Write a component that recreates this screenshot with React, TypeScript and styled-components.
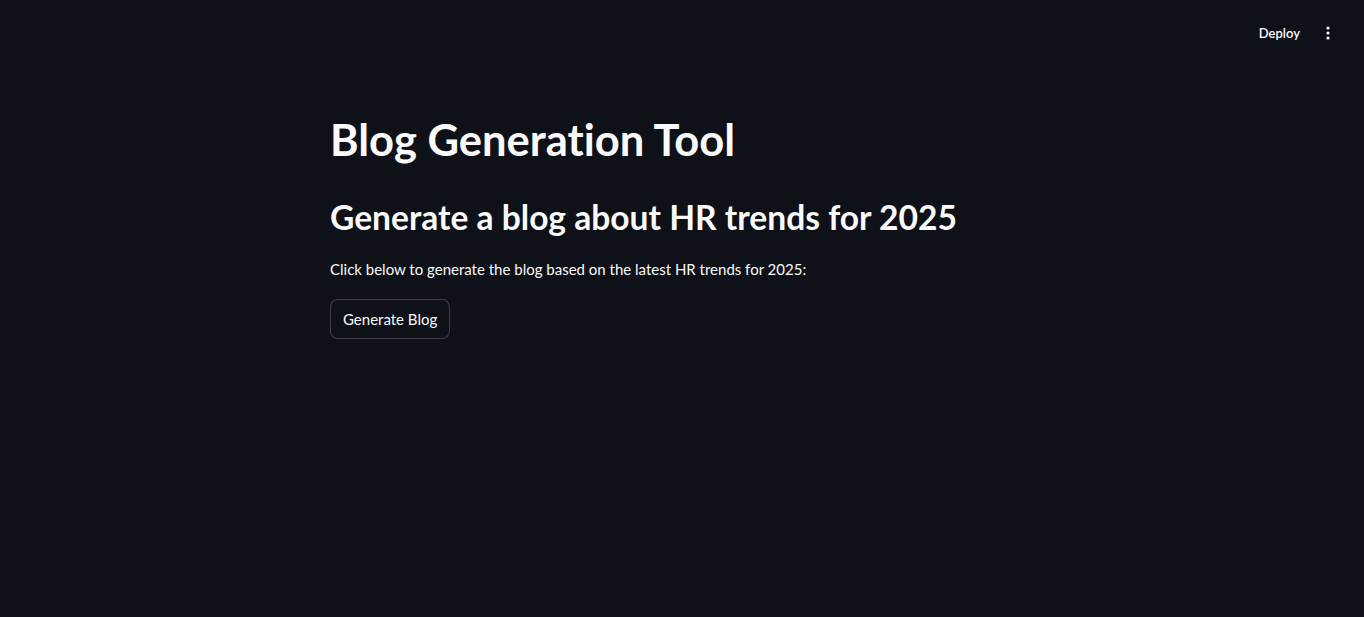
import React from "react";
import styled, { createGlobalStyle } from "styled-components";

const Global = createGlobalStyle`
  html, body { margin: 0; padding: 0; background: #0e1117; }
  body {
    font-family: Lato, "Noto Sans", sans-serif;
    color: #fafafa;
    font-variant-ligatures: none;
    font-feature-settings: "liga" 0, "clig" 0;
  }
  * { box-sizing: border-box; }
`;

const Page = styled.div`
  min-height: 617px;
  background: #0e1117;
  display: flex;
  flex-direction: column;
`;

const Header = styled.header`
  height: 60px;
  display: flex;
  align-items: center;
  justify-content: flex-end;
  padding: 0 20px 0 0;
  gap: 4px;
`;

const HeaderButton = styled.button`
  background: transparent;
  border: none;
  color: #fafafa;
  font-family: Lato, "Noto Sans", sans-serif;
  font-size: 13px;
  font-weight: 600;
  padding: 4px 8px;
  cursor: pointer;
  display: flex;
  align-items: center;
  margin-top: 6px;
`;

const Main = styled.main`
  width: 736px;
  margin: 0 auto;
  padding: 33px 16px 160px;
  display: flex;
  flex-direction: column;
`;

const Title = styled.h1`
  margin: 0;
  font-size: 43.5px;
  font-weight: 700;
  line-height: 1.2;
  padding: 20px 0 16px;
`;

const Subtitle = styled.h2`
  margin: 0;
  font-size: 33.6px;
  font-weight: 700;
  line-height: 1.2;
  padding: 16px 0 19px;
`;

const Text = styled.p`
  margin: 0 0 18px;
  font-size: 15px;
  line-height: 1.6;
`;

const Button = styled.button`
  align-self: flex-start;
  height: 40px;
  padding: 0 12px;
  border-radius: 8px;
  border: 1px solid rgba(250, 250, 250, 0.2);
  background: #0e1117;
  color: #fafafa;
  font-family: Lato, "Noto Sans", sans-serif;
  font-size: 15px;
  cursor: pointer;
`;

const Dots = () => (
  <svg width="16" height="16" viewBox="0 0 16 16" fill="#fafafa">
    <circle cx="8" cy="3" r="1.6" />
    <circle cx="8" cy="8" r="1.6" />
    <circle cx="8" cy="13" r="1.6" />
  </svg>
);

export default function App() {
  return (
    <Page>
      <Global />
      <Header>
        <HeaderButton>Deploy</HeaderButton>
        <HeaderButton><Dots /></HeaderButton>
      </Header>
      <Main>
        <Title>Blog Generation Tool</Title>
        <Subtitle>Generate a blog about HR trends for 2025</Subtitle>
        <Text>Click below to generate the blog based on the latest HR trends for 2025:</Text>
        <Button>Generate Blog</Button>
      </Main>
    </Page>
  );
}
